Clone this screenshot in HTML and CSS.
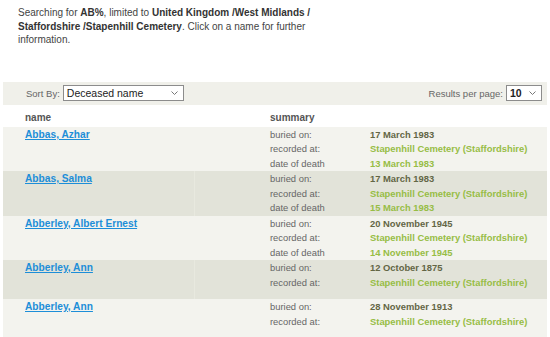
FILE: index.html
```html
<html>
  <head>
    <link rel="stylesheet" href="styles.css">
  </head>
  <body>
    <!-- search summary -->
    <p class="intro">Searching for <b>AB%</b>, limited to <b>United Kingdom /West Midlands / Staffordshire /Stapenhill Cemetery</b>. Click on a name for further information.</p>

    <div class="results">
      <!-- sort + paging controls -->
      <div class="sortbar">
        <div class="control">
          <span>Sort By:</span>
          <div class="select sort-select">
            <span>Deceased name</span>
            <svg width="7" height="4" viewBox="0 0 7 4"><path d="M0.5 0.5 L3.5 3.5 L6.5 0.5" fill="none" stroke="#777" stroke-width="1"/></svg>
          </div>
        </div>
        <div class="control">
          <span>Results per page:</span>
          <div class="select page-select">
            <span>10</span>
            <svg width="7" height="4" viewBox="0 0 7 4"><path d="M0.5 0.5 L3.5 3.5 L6.5 0.5" fill="none" stroke="#777" stroke-width="1"/></svg>
          </div>
        </div>
      </div>

      <div class="head">
        <span>name</span>
        <span>summary</span>
      </div>

      <div class="record">
        <a href="#">Abbas, Azhar</a>
        <dl class="summary">
          <dt>buried on:</dt><dd class="date">17 March 1983</dd>
          <dt>recorded at:</dt><dd class="place">Stapenhill Cemetery (Staffordshire)</dd>
          <dt>date of death</dt><dd class="place">13 March 1983</dd>
        </dl>
      </div>

      <div class="record alt">
        <a href="#">Abbas, Salma</a>
        <dl class="summary">
          <dt>buried on:</dt><dd class="date">17 March 1983</dd>
          <dt>recorded at:</dt><dd class="place">Stapenhill Cemetery (Staffordshire)</dd>
          <dt>date of death</dt><dd class="place">15 March 1983</dd>
        </dl>
      </div>

      <div class="record">
        <a href="#">Abberley, Albert Ernest</a>
        <dl class="summary">
          <dt>buried on:</dt><dd class="date">20 November 1945</dd>
          <dt>recorded at:</dt><dd class="place">Stapenhill Cemetery (Staffordshire)</dd>
          <dt>date of death</dt><dd class="place">14 November 1945</dd>
        </dl>
      </div>

      <div class="record alt">
        <a href="#">Abberley, Ann</a>
        <dl class="summary">
          <dt>buried on:</dt><dd class="date">12 October 1875</dd>
          <dt>recorded at:</dt><dd class="place">Stapenhill Cemetery (Staffordshire)</dd>
        </dl>
      </div>

      <div class="record">
        <a href="#">Abberley, Ann</a>
        <dl class="summary">
          <dt>buried on:</dt><dd class="date">28 November 1913</dd>
          <dt>recorded at:</dt><dd class="place">Stapenhill Cemetery (Staffordshire)</dd>
        </dl>
      </div>
    </div>
  </body>
</html>
```

FILE: styles.css
```css
body{
  margin: 0;
  font-family: 'Liberation Sans', Arial, sans-serif;
  background-color: white;
  color: #444;
}
.intro{
  margin: 0;
  padding: 6px 0 0 18px;
  width: 330px;
  font-size: 10px;
  line-height: 13.5px;
  color: #444;
}
.intro b{
  color: #333;
}
.results{
  margin: 35px 3px 0 3px;
}
/* sort bar */
.sortbar{
  height: 23px;
  display: flex;
  align-items: center;
  justify-content: space-between;
  padding: 0 5px 0 23px;
  background-color: #f0f0ea;
  font-size: 9.5px;
  color: #666;
}
.control{
  display: flex;
  align-items: center;
  gap: 3px;
}
.select{
  box-sizing: border-box;
  height: 16px;
  display: flex;
  align-items: center;
  justify-content: space-between;
  padding: 0 5px 0 3px;
  border: 1px solid #8c8c8c;
  background-color: white;
  font-size: 10.5px;
  color: #222;
}
.sort-select{
  width: 121px;
}
.page-select{
  width: 36px;
  font-weight: bold;
}
/* table */
.head{
  display: grid;
  grid-template-columns: 267px 1fr;
  height: 22px;
  padding-top: 7px;
  box-sizing: border-box;
  font-size: 10px;
  font-weight: bold;
  color: #555;
}
.head span:first-child{
  padding-left: 22px;
}
.record{
  display: grid;
  grid-template-columns: 267px 1fr;
  align-items: start;
  min-height: 39px;
  padding-top: 1px;
  box-sizing: border-box;
  background-color: #f3f3ee;
}
.record.alt{
  background: linear-gradient(to right, transparent 191px, #e8e9df 191px, #e8e9df 192px, transparent 192px), #e2e3d9;
}
.record a{
  padding-left: 22px;
  font-size: 10.2px;
  line-height: 14.5px;
  font-weight: bold;
  color: #1d8ed8;
}
.summary{
  margin: 0;
  display: grid;
  grid-template-columns: 100px 1fr;
  font-size: 9.4px;
  line-height: 14.5px;
}
.summary dt{
  color: #666;
}
.summary dd{
  margin: 0;
  font-weight: bold;
}
.summary .date{
  color: #636645;
}
.summary .place{
  color: #97bd45;
}
```
